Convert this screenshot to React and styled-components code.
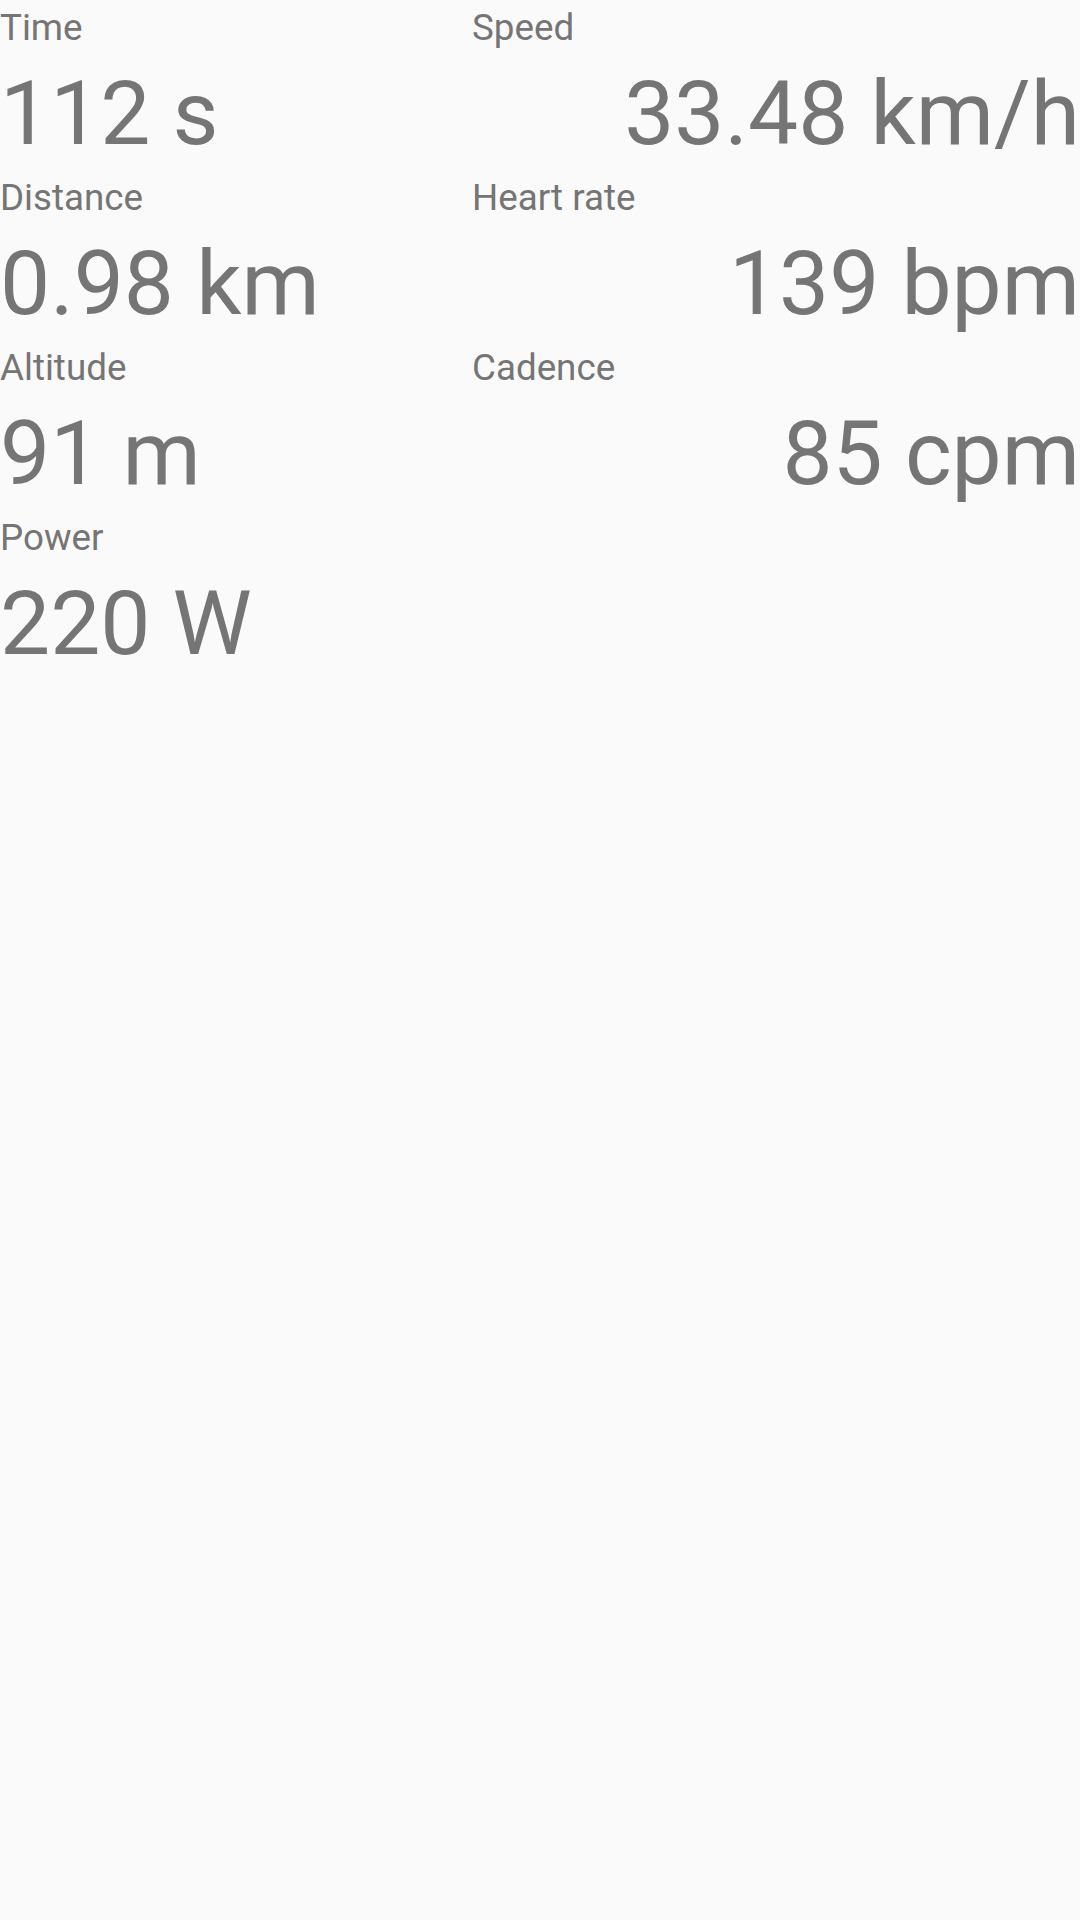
import React from "react";
import styled, { createGlobalStyle } from "styled-components";

const GlobalStyle = createGlobalStyle`
  html, body {
    margin: 0;
    padding: 0;
    background: #fafafa;
  }
  body {
    font-family: Roboto, "Noto Sans", sans-serif;
    -webkit-font-smoothing: antialiased;
  }
`;

const Screen = styled.div`
  width: 1080px;
  height: 1920px;
  background: #fafafa;
  color: #757575;
  display: grid;
  grid-template-columns: 472px 1fr;
  grid-auto-rows: 170px;
  align-content: start;
`;

const Cell = styled.div`
  display: flex;
  flex-direction: column;
  align-items: ${(p) => (p.$right ? "flex-end" : "flex-start")};
`;

const Label = styled.span`
  align-self: flex-start;
  font-size: 36.75px;
  line-height: 56px;
  font-weight: 400;
  white-space: nowrap;
`;

const Value = styled.span`
  margin-top: 2px;
  font-size: 89.25px;
  line-height: 112px;
  font-weight: 400;
  white-space: nowrap;
`;

const stats = [
  { label: "Time", value: "112 s" },
  { label: "Speed", value: "33.48 km/h" },
  { label: "Distance", value: "0.98 km" },
  { label: "Heart rate", value: "139 bpm" },
  { label: "Altitude", value: "91 m" },
  { label: "Cadence", value: "85 cpm" },
  { label: "Power", value: "220 W" },
];

export default function App() {
  return (
    <>
      <GlobalStyle />
      <Screen>
        {stats.map((s, i) => (
          <Cell key={s.label} $right={i % 2 === 1}>
            <Label>{s.label}</Label>
            <Value>{s.value}</Value>
          </Cell>
        ))}
      </Screen>
    </>
  );
}
